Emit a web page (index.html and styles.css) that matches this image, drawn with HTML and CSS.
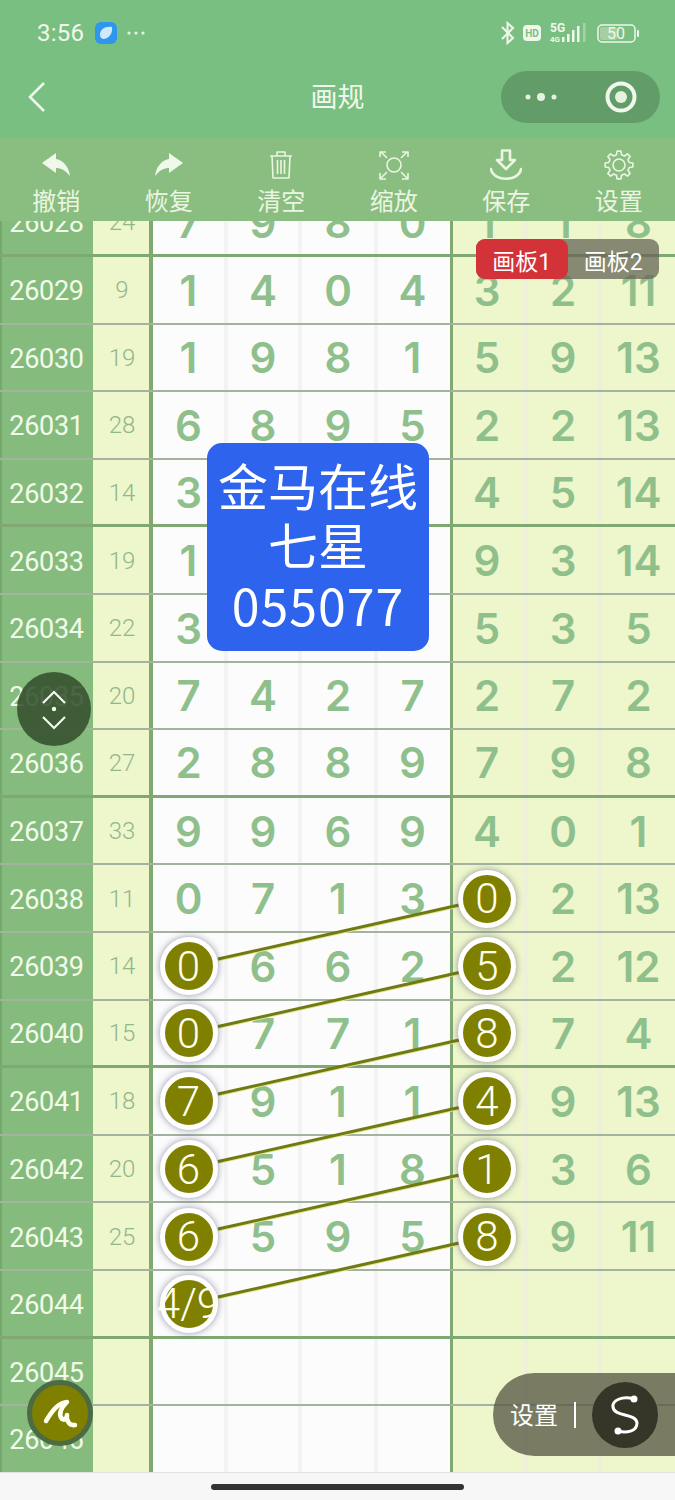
FILE: index.html
```html
<!DOCTYPE html>
<html lang="zh">
<head>
<meta charset="utf-8">
<title>画规</title>
<link rel="stylesheet" href="styles.css">
</head>
<body>
<div class="page">
  <header class="top">
    <div class="status">
      <div class="status-left">
        <span class="clock">3:56</span>
        <svg class="app-icon" viewBox="0 0 22 22"><rect width="22" height="22" rx="6" fill="#2f96ee"/><path d="M5 13 C5 7 10 4 17 5 C18 11 14 17 8 17 C6 16 5 15 5 13Z" fill="#cfe8fb"/></svg>
        <svg class="more-dots" viewBox="0 0 20 6"><circle cx="3" cy="3" r="1.6"/><circle cx="10" cy="3" r="1.6"/><circle cx="17" cy="3" r="1.6"/></svg>
      </div>
      <svg class="status-right" viewBox="0 0 142 26">
        <path class="bt" d="M3 7 L14 18 L8.500 23 V3 L14 8 L3 19"/>
        <rect class="hd-box" x="24" y="5" width="18" height="16" rx="4"/>
        <text class="hd-text" x="33" y="17">HD</text>
        <text class="net-text" x="51" y="12">5G</text>
        <text class="net-small" x="51" y="22">4G</text>
        <rect class="bar" x="63" y="17" width="2.500" height="5"/>
        <rect class="bar" x="68" y="14" width="2.500" height="8"/>
        <rect class="bar" x="73" y="10" width="2.500" height="12"/>
        <rect class="bar" x="78" y="6" width="2.500" height="16"/>
        <rect class="bar dim" x="84" y="3" width="2.500" height="19"/>
        <rect class="batt" x="99" y="5" width="37" height="17" rx="4"/>
        <rect class="batt-fill" x="101" y="7" width="17" height="13" rx="2"/>
        <text class="batt-text" x="117" y="19">50</text>
        <rect class="batt-tip" x="138" y="10" width="2" height="7" rx="1"/>
      </svg>
    </div>
    <nav class="nav">
      <svg class="back" viewBox="0 0 20 32"><path d="M17 2 L3 16 L17 30"/></svg>
      <h1 class="title">画规</h1>
      <div class="capsule">
        <svg class="cap-dots" viewBox="0 0 34 10"><circle cx="4" cy="5" r="2.500"/><circle cx="17" cy="5" r="4"/><circle cx="30" cy="5" r="2.500"/></svg>
        <svg class="cap-target" viewBox="0 0 32 32"><circle class="ring" cx="16" cy="16" r="13.500"/><circle cx="16" cy="16" r="6"/></svg>
      </div>
    </nav>
    <div class="tools">
      <div class="tool">
        <svg class="tool-icon" viewBox="0 0 32 32"><path class="solid" d="M2 14 L16 4 V10 C24 11 29 19 30 27 C25 21 21 19 16 19 V24 Z"/></svg>
        <span>撤销</span>
      </div>
      <div class="tool">
        <svg class="tool-icon" viewBox="0 0 32 32"><path class="solid" d="M30 14 L16 4 V10 C8 11 3 19 2 27 C7 21 11 19 16 19 V24 Z"/></svg>
        <span>恢复</span>
      </div>
      <div class="tool">
        <svg class="tool-icon" viewBox="0 0 32 32"><path class="line" d="M5 7 H27 M12 7 V3 H20 V7 M7 7 L8 29 H24 L25 7 M12.500 11 V25 M16 11 V25 M19.500 11 V25"/></svg>
        <span>清空</span>
      </div>
      <div class="tool">
        <svg class="tool-icon" viewBox="0 0 32 32"><circle class="line" cx="16" cy="16" r="7"/><path class="line" d="M2 8 V3 H8 M3 3 L9 9 M24 3 H30 V8 M29 3 L23 9 M2 24 V30 H8 M3 29 L9 23 M24 30 H30 V24 M29 29 L23 23"/></svg>
        <span>缩放</span>
      </div>
      <div class="tool">
        <svg class="tool-icon" viewBox="0 0 32 32"><path class="line thick" d="M12 1.500 H20 V11 H25 L16 20 L7 11 H12 Z M1 20 C3 33 29 33 31 20"/></svg>
        <span>保存</span>
      </div>
      <div class="tool">
        <svg class="tool-icon" viewBox="-16 -16 32 32"><path class="line" d="M-2.540 -10.190 L-1.950 -13.860 L1.950 -13.860 L2.540 -10.190 L5.410 -9 L8.430 -11.180 L11.180 -8.430 L9 -5.410 L10.190 -2.540 L13.860 -1.950 L13.860 1.950 L10.190 2.540 L9 5.410 L11.180 8.430 L8.430 11.180 L5.410 9 L2.540 10.190 L1.950 13.860 L-1.950 13.860 L-2.540 10.190 L-5.410 9 L-8.430 11.180 L-11.180 8.430 L-9 5.410 L-10.190 2.540 L-13.860 1.950 L-13.860 -1.950 L-10.190 -2.540 L-9 -5.410 L-11.180 -8.430 L-8.430 -11.180 L-5.410 -9 Z"/><circle class="line" r="6"/></svg>
        <span>设置</span>
      </div>
    </div>
  </header>

  <main class="board">
    <div class="sheet">
      <div class="row heavy"><div class="period">26028</div><div class="sum">24</div><div class="cell">7</div><div class="cell">9</div><div class="cell">8</div><div class="cell last">0</div><div class="cell alt first">1</div><div class="cell alt">1</div><div class="cell alt last">8</div></div>
      <div class="row"><div class="period">26029</div><div class="sum">9</div><div class="cell">1</div><div class="cell">4</div><div class="cell">0</div><div class="cell last">4</div><div class="cell alt first">3</div><div class="cell alt">2</div><div class="cell alt last">11</div></div>
      <div class="row"><div class="period">26030</div><div class="sum">19</div><div class="cell">1</div><div class="cell">9</div><div class="cell">8</div><div class="cell last">1</div><div class="cell alt first">5</div><div class="cell alt">9</div><div class="cell alt last">13</div></div>
      <div class="row"><div class="period">26031</div><div class="sum">28</div><div class="cell">6</div><div class="cell">8</div><div class="cell">9</div><div class="cell last">5</div><div class="cell alt first">2</div><div class="cell alt">2</div><div class="cell alt last">13</div></div>
      <div class="row heavy"><div class="period">26032</div><div class="sum">14</div><div class="cell">3</div><div class="cell"></div><div class="cell"></div><div class="cell last"></div><div class="cell alt first">4</div><div class="cell alt">5</div><div class="cell alt last">14</div></div>
      <div class="row"><div class="period">26033</div><div class="sum">19</div><div class="cell">1</div><div class="cell"></div><div class="cell"></div><div class="cell last"></div><div class="cell alt first">9</div><div class="cell alt">3</div><div class="cell alt last">14</div></div>
      <div class="row"><div class="period">26034</div><div class="sum">22</div><div class="cell">3</div><div class="cell"></div><div class="cell"></div><div class="cell last"></div><div class="cell alt first">5</div><div class="cell alt">3</div><div class="cell alt last">5</div></div>
      <div class="row"><div class="period">26035</div><div class="sum">20</div><div class="cell">7</div><div class="cell">4</div><div class="cell">2</div><div class="cell last">7</div><div class="cell alt first">2</div><div class="cell alt">7</div><div class="cell alt last">2</div></div>
      <div class="row heavy"><div class="period">26036</div><div class="sum">27</div><div class="cell">2</div><div class="cell">8</div><div class="cell">8</div><div class="cell last">9</div><div class="cell alt first">7</div><div class="cell alt">9</div><div class="cell alt last">8</div></div>
      <div class="row"><div class="period">26037</div><div class="sum">33</div><div class="cell">9</div><div class="cell">9</div><div class="cell">6</div><div class="cell last">9</div><div class="cell alt first">4</div><div class="cell alt">0</div><div class="cell alt last">1</div></div>
      <div class="row"><div class="period">26038</div><div class="sum">11</div><div class="cell">0</div><div class="cell">7</div><div class="cell">1</div><div class="cell last">3</div><div class="cell alt first"><span class="ball">0</span></div><div class="cell alt">2</div><div class="cell alt last">13</div></div>
      <div class="row"><div class="period">26039</div><div class="sum">14</div><div class="cell"><span class="ball">0</span></div><div class="cell">6</div><div class="cell">6</div><div class="cell last">2</div><div class="cell alt first"><span class="ball">5</span></div><div class="cell alt">2</div><div class="cell alt last">12</div></div>
      <div class="row heavy"><div class="period">26040</div><div class="sum">15</div><div class="cell"><span class="ball">0</span></div><div class="cell">7</div><div class="cell">7</div><div class="cell last">1</div><div class="cell alt first"><span class="ball">8</span></div><div class="cell alt">7</div><div class="cell alt last">4</div></div>
      <div class="row"><div class="period">26041</div><div class="sum">18</div><div class="cell"><span class="ball">7</span></div><div class="cell">9</div><div class="cell">1</div><div class="cell last">1</div><div class="cell alt first"><span class="ball">4</span></div><div class="cell alt">9</div><div class="cell alt last">13</div></div>
      <div class="row"><div class="period">26042</div><div class="sum">20</div><div class="cell"><span class="ball">6</span></div><div class="cell">5</div><div class="cell">1</div><div class="cell last">8</div><div class="cell alt first"><span class="ball">1</span></div><div class="cell alt">3</div><div class="cell alt last">6</div></div>
      <div class="row"><div class="period">26043</div><div class="sum">25</div><div class="cell"><span class="ball">6</span></div><div class="cell">5</div><div class="cell">9</div><div class="cell last">5</div><div class="cell alt first"><span class="ball">8</span></div><div class="cell alt">9</div><div class="cell alt last">11</div></div>
      <div class="row heavy"><div class="period">26044</div><div class="sum"></div><div class="cell"><span class="ball">4/9</span></div><div class="cell"></div><div class="cell"></div><div class="cell last"></div><div class="cell alt first"></div><div class="cell alt"></div><div class="cell alt last"></div></div>
      <div class="row"><div class="period">26045</div><div class="sum"></div><div class="cell"></div><div class="cell"></div><div class="cell"></div><div class="cell last"></div><div class="cell alt first"></div><div class="cell alt"></div><div class="cell alt last"></div></div>
      <div class="row"><div class="period">26046</div><div class="sum"></div><div class="cell"></div><div class="cell"></div><div class="cell"></div><div class="cell last"></div><div class="cell alt first"></div><div class="cell alt"></div><div class="cell alt last"></div></div>
    </div>
  </main>

  <footer class="home"><span class="home-bar"></span></footer>

  <!-- connecting strokes between picked balls, in page coordinates -->
  <svg class="links" viewBox="0 0 675 1500">
    <g class="link-glow">
      <line x1="218" y1="960" x2="459" y2="906"/>
      <line x1="218" y1="1027.500" x2="459" y2="973.500"/>
      <line x1="218" y1="1095" x2="459" y2="1041"/>
      <line x1="218" y1="1162.500" x2="459" y2="1108.500"/>
      <line x1="218" y1="1230" x2="459" y2="1176"/>
      <line x1="218" y1="1298" x2="459" y2="1244"/>
    </g>
    <g class="link-core">
      <line x1="218" y1="959" x2="459" y2="905"/>
      <line x1="218" y1="1026.500" x2="459" y2="972.500"/>
      <line x1="218" y1="1094" x2="459" y2="1040"/>
      <line x1="218" y1="1161.500" x2="459" y2="1107.500"/>
      <line x1="218" y1="1229" x2="459" y2="1175"/>
      <line x1="218" y1="1297" x2="459" y2="1243"/>
    </g>
  </svg>

  <div class="tabs">
    <span class="tab active">画板1</span>
    <span class="tab">画板2</span>
  </div>

  <div class="notice">
    <p>金马在线</p>
    <p>七星</p>
    <p class="notice-code">055077</p>
  </div>

  <button class="scroll-fab" type="button">
    <svg viewBox="17 672 74 74"><path d="M43 703 L54 692 L65 703 M43 717 L54 728 L65 717"/><circle cx="54" cy="709" r="2.200"/></svg>
  </button>

  <button class="pen-fab" type="button">
    <svg viewBox="27 1380 66 66"><path d="M46 1421 C52 1411 58 1403 67 1402 C61 1408 58 1414 62 1419 C65 1421 67 1417 67 1415 C66 1420 69 1426 75 1425"/></svg>
  </button>

  <div class="settings-pill">
    <span class="settings-label">设置</span>
    <span class="settings-rule"></span>
    <span class="settings-knob">
      <svg viewBox="592 1381 66 66"><path d="M634 1398 C622 1394 612 1400 613 1406 C614 1416 636 1412 637 1422 C637 1431 626 1432 618 1430"/><circle cx="634" cy="1398" r="3.500"/><circle cx="618" cy="1430" r="3.500"/></svg>
    </span>
  </div>
</div>
</body>
</html>
```

FILE: styles.css
```css
* {
  box-sizing: border-box;
}

html,
body {
  margin: 0;
  padding: 0;
}

body {
  background: #f7f7f7;
  font-family: "Roboto", "Noto Sans CJK SC", sans-serif;
}

.page {
  position: relative;
  width: 675px;
  height: 1500px;
  overflow: hidden;
}

/* Header: status bar, title bar, tool strip */
.top {
  position: relative;
  z-index: 5;
  height: 221px;
  background: #7abf82;
  color: #f0f8ec;
}

.status {
  display: flex;
  align-items: center;
  justify-content: space-between;
  height: 66px;
  padding: 0 34px 0 37px;
}

.status-left {
  display: flex;
  align-items: center;
}

.clock {
  font-size: 24px;
  letter-spacing: 0.2px;
}

.app-icon {
  width: 22px;
  height: 22px;
  margin-left: 11px;
}

.more-dots {
  width: 20px;
  height: 6px;
  margin-left: 9px;
  fill: #e6f4e0;
}

.status-right {
  width: 142px;
  height: 26px;
}

.bt {
  fill: none;
  stroke: #f0f8ec;
  stroke-width: 2;
}

.hd-box {
  fill: #f0f8ec;
}

.hd-text {
  font: 700 10px "Roboto", sans-serif;
  text-anchor: middle;
  fill: #7abf82;
}

.net-text {
  font: 700 12px "Roboto", sans-serif;
  fill: #f0f8ec;
}

.net-small {
  font: 700 8px "Roboto", sans-serif;
  fill: #f0f8ec;
}

.bar {
  fill: #f0f8ec;
}

.bar.dim {
  opacity: 0.35;
}

.batt {
  fill: none;
  stroke: #f0f8ec;
  stroke-width: 1.5;
}

.batt-fill {
  fill: #a5cfa3;
}

.batt-text {
  font: 400 16px "Roboto", sans-serif;
  text-anchor: middle;
  fill: #f0f8ec;
}

.batt-tip {
  fill: #f0f8ec;
}

.nav {
  display: grid;
  grid-template-columns: 1fr auto 1fr;
  align-items: center;
  height: 72px;
  padding: 0 15px 10px;
}

.back {
  width: 20px;
  height: 32px;
  margin-left: 12px;
  fill: none;
  stroke: #f0f8ec;
  stroke-width: 2.600;
}

.title {
  margin: 0;
  padding-top: 1px;
  font-size: 27px;
  font-weight: 400;
  line-height: 36px;
}

.capsule {
  display: flex;
  align-items: center;
  justify-content: space-between;
  justify-self: end;
  width: 159px;
  height: 52px;
  padding: 0 23px;
  border-radius: 26px;
  background: #629c68;
}

.cap-dots {
  width: 34px;
  height: 10px;
  fill: #e4f2e0;
}

.cap-target {
  width: 32px;
  height: 32px;
  fill: #e4f2e0;
}

.cap-target .ring {
  fill: none;
  stroke: #f0f8ec;
  stroke-width: 4;
}

.tools {
  display: grid;
  grid-template-columns: repeat(6, 1fr);
  height: 83px;
  padding-top: 11px;
  background: #8abe80;
}

.tool {
  display: flex;
  flex-direction: column;
  align-items: center;
  gap: 7px;
  font-size: 24px;
  line-height: 28px;
  color: #eaf5e2;
}

.tool-icon {
  width: 32px;
  height: 32px;
}

.solid {
  fill: #f0f8ec;
}

.line {
  fill: none;
  stroke: #eaf5e2;
  stroke-width: 1.600;
  stroke-linejoin: round;
}

.line.thick {
  stroke-width: 2.600;
  stroke-linecap: round;
}

/* Draw board: the sheet is scrolled a little under the header */
.board {
  height: 1251px;
  overflow: hidden;
  background: #fcfcfc;
}

.sheet {
  margin-top: -31.600px;
}

.row {
  display: grid;
  grid-template-columns: 93px 60px 75px 74px 76px 72px 78px 74px 73px;
  height: 67.600px;
  border-bottom: 2px solid #a3b39f;
}

.row.heavy {
  border-bottom: 3px solid #7fa873;
}

.row > div {
  display: flex;
  align-items: center;
  justify-content: center;
  padding-top: 1px;
}

.period {
  padding-top: 3px;
  padding-right: 2px;
  border-left: 2px solid #74a86c;
  background: #86bb7e;
  color: #f2fbe9;
  font-size: 27px;
  letter-spacing: -0.300px;
}

.row > .period {
  padding-top: 3px;
}

.sum {
  padding-left: 2px;
  border-right: 4px solid #7fa873;
  background: #eef6cc;
  color: #92b78a;
  font-size: 24px;
  font-weight: 300;
}

.cell {
  border-right: 4px solid #f3f3f4;
  background: #fcfcfc;
  color: #8fc08c;
  font-family: "Inter", sans-serif;
  font-size: 42px;
  font-weight: 600;
}

.cell.last {
  padding-right: 3px;
  border-right: 0;
}

.cell.alt {
  border-right-color: #eef0dc;
  background: #eef6cc;
}

.cell.alt.last {
  padding-right: 0;
  border-right: 0;
}

.cell.first {
  box-shadow: inset 3px 0 0 #7fa873;
}

.ball {
  position: relative;
  z-index: 2;
  display: flex;
  flex: none;
  align-items: center;
  justify-content: center;
  width: 58px;
  height: 58px;
  border: 5.500px solid #fff;
  border-radius: 50%;
  background: #808000;
  box-shadow: 0 0 7px rgba(60, 60, 110, 0.55);
  color: #fffff0;
  font-family: "Roboto", sans-serif;
  font-size: 42px;
  font-weight: 300;
  white-space: nowrap;
}

.home {
  display: flex;
  align-items: center;
  justify-content: center;
  height: 28px;
  border-top: 1px solid #e2e2e2;
  background: #f7f7f7;
}

.home-bar {
  width: 253px;
  height: 6px;
  border-radius: 3px;
  background: #333;
}

/* Pieces that float over the board */
.links {
  position: absolute;
  top: 0;
  left: 0;
  z-index: 1;
  width: 675px;
  height: 1500px;
  pointer-events: none;
}

.link-glow {
  stroke: #e4e48e;
  stroke-width: 3;
}

.link-core {
  stroke: #6f7a12;
  stroke-width: 3;
}

.tabs {
  position: absolute;
  top: 239px;
  left: 476px;
  z-index: 3;
  display: flex;
  width: 183px;
  height: 40px;
  border-radius: 9px;
  background: rgba(100, 100, 85, 0.75);
  color: #fff;
  font-size: 23px;
}

.tab {
  flex: 1;
  padding-top: 8px;
  line-height: 32px;
  text-align: center;
}

.tab.active {
  border-radius: 9px;
  background: #d33238;
}

.notice {
  position: absolute;
  top: 443px;
  left: 207px;
  z-index: 3;
  width: 222px;
  height: 208px;
  padding-top: 12px;
  border-radius: 15px;
  background: #2e63ee;
  color: #fff;
  font-family: "Noto Sans CJK SC", sans-serif;
  font-size: 50px;
  line-height: 58.500px;
  text-align: center;
}

.notice p {
  margin: 0;
}

.notice .notice-code {
  margin-top: 3px;
  letter-spacing: 1px;
}

.scroll-fab,
.pen-fab {
  position: absolute;
  z-index: 3;
  padding: 0;
  border: 0;
  border-radius: 50%;
}

.scroll-fab {
  top: 672px;
  left: 17px;
  width: 74px;
  height: 74px;
  background: rgba(52, 80, 46, 0.88);
}

.scroll-fab svg {
  display: block;
  width: 74px;
  height: 74px;
  fill: #f4f8f0;
  stroke: none;
}

.scroll-fab path {
  fill: none;
  stroke: #f4f8f0;
  stroke-width: 2.200;
}

.pen-fab {
  top: 1380px;
  left: 27px;
  width: 66px;
  height: 66px;
  border: 5px solid #4c6a44;
  background: #808000;
}

.pen-fab svg {
  display: block;
  width: 66px;
  height: 66px;
  margin: -5px;
}

.pen-fab path {
  fill: none;
  stroke: #fffff0;
  stroke-width: 4.500;
  stroke-linecap: round;
  stroke-linejoin: round;
}

.settings-pill {
  position: absolute;
  top: 1373px;
  left: 493px;
  z-index: 3;
  display: flex;
  align-items: center;
  width: 182px;
  height: 83px;
  padding-left: 17px;
  border-radius: 41.500px 0 0 41.500px;
  background: rgba(88, 88, 68, 0.78);
  color: #fff;
  font-size: 24px;
}

.settings-label {
  margin-bottom: 3px;
}

.settings-rule {
  width: 2px;
  height: 26px;
  margin-left: 16px;
  background: #fff;
}

.settings-knob {
  display: block;
  width: 66px;
  height: 66px;
  margin-left: 16px;
  border-radius: 50%;
  background: #353628;
}

.settings-knob svg {
  display: block;
  width: 66px;
  height: 66px;
  fill: #fff;
}

.settings-knob path {
  fill: none;
  stroke: #fff;
  stroke-width: 3;
  stroke-linecap: round;
}
```
